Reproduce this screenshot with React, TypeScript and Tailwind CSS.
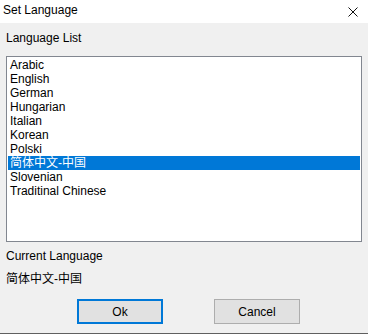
const languages = [
  'Arabic',
  'English',
  'German',
  'Hungarian',
  'Italian',
  'Korean',
  'Polski',
  '简体中文-中国',
  'Slovenian',
  'Traditinal Chinese',
];

const selected = '简体中文-中国';

export default function App() {
  return (
    <div
      className="w-[368px] h-[334px] bg-[#f0f0f0] text-[12px] text-black border-b border-[#5f5f5f] flex flex-col"
      style={{ fontFamily: '"Liberation Sans", "Noto Sans CJK SC", sans-serif' }}
    >
      {/* Title bar */}
      <div className="h-[23px] bg-white flex justify-between shrink-0">
        <span className="pl-[3px] pt-[3px] leading-[14px]">Set Language</span>
        <div className="pt-[7px] pr-[10px]">
          <svg width="10" height="10" viewBox="0 0 10 10" fill="none" stroke="#111" strokeWidth="1">
            <path d="M0.5 0.5 L9.5 9.5 M9.5 0.5 L0.5 9.5" />
          </svg>
        </div>
      </div>

      <div className="px-[6px] flex flex-col">
        <div className="mt-[8px] leading-[14px] h-[14px]">Language List</div>

        {/* List box */}
        <div className="mt-[11px] h-[186px] bg-white border border-[#828790] p-[1px]">
          {languages.map((lang) => (
            <div
              key={lang}
              className={
                'h-[14px] leading-[14px] pl-[2px] whitespace-nowrap ' +
                (lang === selected ? 'bg-[#0078d7] text-white' : '')
              }
            >
              {lang}
            </div>
          ))}
        </div>

        <div className="mt-[7px] leading-[14px] h-[14px]">Current Language</div>
        <div className="mt-[8px] leading-[16px] h-[16px]">简体中文-中国</div>
      </div>

      {/* Buttons */}
      <div className="mt-[12px] pl-[77px] flex gap-[51px]">
        <button className="w-[86px] h-[25px] bg-[#e1e1e1] border-2 border-[#0078d7] leading-[14px] text-[12px]">
          Ok
        </button>
        <button className="w-[86px] h-[25px] bg-[#e1e1e1] border border-[#adadad] leading-[14px] text-[12px]">
          Cancel
        </button>
      </div>
    </div>
  );
}
